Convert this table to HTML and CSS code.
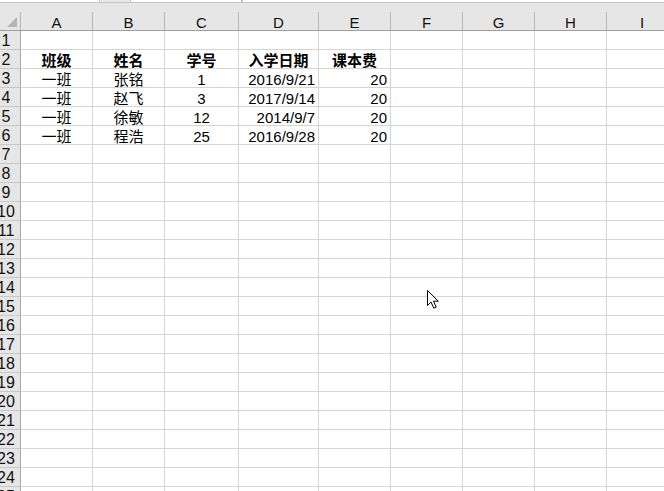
FILE: index.html
```html
<!DOCTYPE html>
<html lang="zh-CN">
<head>
<meta charset="utf-8">
<title>Sheet</title>
<link rel="stylesheet" href="styles.css">
</head>
<body>
<div class="sheet">
  <div class="topstrip">
    <div class="tbox tbox-1"></div>
    <div class="tgap"></div>
    <div class="tbox tbox-2"></div>
    <div class="tbox tbox-3"></div>
  </div>
  <div class="colhead">
    <div class="corner"><span class="tri"></span></div>
    <div class="ch">A</div>
    <div class="ch">B</div>
    <div class="ch">C</div>
    <div class="ch">D</div>
    <div class="ch">E</div>
    <div class="ch">F</div>
    <div class="ch">G</div>
    <div class="ch">H</div>
    <div class="ch">I</div>
  </div>
  <div class="grid" id="grid"></div>
</div>
<svg class="cursor" width="14" height="21" viewBox="0 0 14 21" xmlns="http://www.w3.org/2000/svg">
  <path d="M1.5 1.5 L1.5 16.5 L5 13 L7.8 19.2 L10.2 18.2 L7.5 12.2 L12.3 12.2 Z" fill="#fff" stroke="#000" stroke-width="1" stroke-linejoin="miter"/>
</svg>
<script src="script.js"></script>
</body>
</html>
```
FILE: script.js
```js
(function () {
  var data = {
    2: [["班级","c b"],["姓名","c b"],["学号","c b"],["入学日期","c b"],["课本费","c b"]],
    3: [["一班","c"],["张铭","c"],["1","c"],["2016/9/21","r"],["20","r"]],
    4: [["一班","c"],["赵飞","c"],["3","c"],["2017/9/14","r"],["20","r"]],
    5: [["一班","c"],["徐敏","c"],["12","c"],["2014/9/7","r"],["20","r"]],
    6: [["一班","c"],["程浩","c"],["25","c"],["2016/9/28","r"],["20","r"]]
  };
  var grid = document.getElementById("grid");
  var html = "";
  for (var r = 1; r <= 25; r++) {
    html += '<div class="rh"><span class="rn">' + r + '</span></div>';
    for (var c = 0; c < 9; c++) {
      var cell = data[r] && data[r][c];
      if (cell) {
        html += '<div class="cell ' + cell[1] + '">' + cell[0] + '</div>';
      } else {
        html += '<div class="cell"></div>';
      }
    }
  }
  grid.innerHTML = html;
})();
```
FILE: styles.css
```css
html, body {
  margin: 0;
  padding: 0;
  background: #ffffff;
  overflow: hidden;
}
body {
  width: 664px;
  height: 491px;
  position: relative;
  font-family: "Liberation Sans", "Noto Sans CJK SC", sans-serif;
  color: #000;
}
.sheet {
  width: 664px;
  height: 491px;
  overflow: hidden;
}
.topstrip {
  height: 3px;
  display: flex;
  background: #ffffff;
  border-bottom: 1px solid #c6c6c6;
  box-sizing: border-box;
}
.tbox {
  height: 2px;
  background: #fff;
}
.tbox-1 { width: 99px; border-right: 1px solid #c6c6c6; }
.tgap { width: 30px; background: #e6e6e6; height: 2px; }
.tbox-2 { width: 110px; border-left: 1px solid #c6c6c6; border-right: 1px solid #c6c6c6; }
.tbox-3 { flex: 1; border-left: 1px solid #c6c6c6; }

.colhead {
  display: grid;
  grid-template-columns: 21px 72px 72px 74px 80px 72px 72px 72px 72px 58px;
  background: #e6e6e6;
  padding-top: 9px;
  border-bottom: 1px solid #9f9f9f;
  height: 28px;
  box-sizing: border-box;
}
.colhead > div {
  height: 18px;
  box-sizing: border-box;
  border-right: 1px solid #b5b5b5;
}
.colhead > div:last-child {
  border-right: none;
  text-align: left;
  padding-left: 33px;
}
.corner {
  position: relative;
}
.tri {
  position: absolute;
  left: 7px;
  top: 5px;
  width: 0;
  height: 0;
  border-left: 10px solid transparent;
  border-bottom: 10px solid #b4b4b4;
}
.ch {
  font-size: 15px;
  line-height: 15px;
  padding-top: 3px;
  text-align: center;
  color: #111;
}

.grid {
  display: grid;
  grid-template-columns: 21px 72px 72px 74px 80px 72px 72px 72px 72px 58px;
  grid-auto-rows: 19px;
}
.rh {
  background: #e6e6e6;
  border-right: 1px solid #a8a8a8;
  border-bottom: 1px solid #c8c8c8;
  box-sizing: border-box;
  overflow: hidden;
  display: flex;
  align-items: flex-end;
}
.rn {
  width: 12px;
  display: flex;
  justify-content: center;
  white-space: nowrap;
  font-size: 16px;
  line-height: 16px;
  color: #111;
}
.cell {
  border-right: 1px solid #d4d4d4;
  border-bottom: 1px solid #d4d4d4;
  box-sizing: border-box;
  font-size: 15px;
  line-height: 15px;
  padding-top: 3px;
  padding-right: 3px;
  padding-left: 2px;
  white-space: nowrap;
  overflow: hidden;
}
.c { text-align: center; padding-right: 2px; }
.r { text-align: right; }
.b { font-weight: bold; }

.cursor {
  position: absolute;
  left: 426px;
  top: 289px;
}
```
